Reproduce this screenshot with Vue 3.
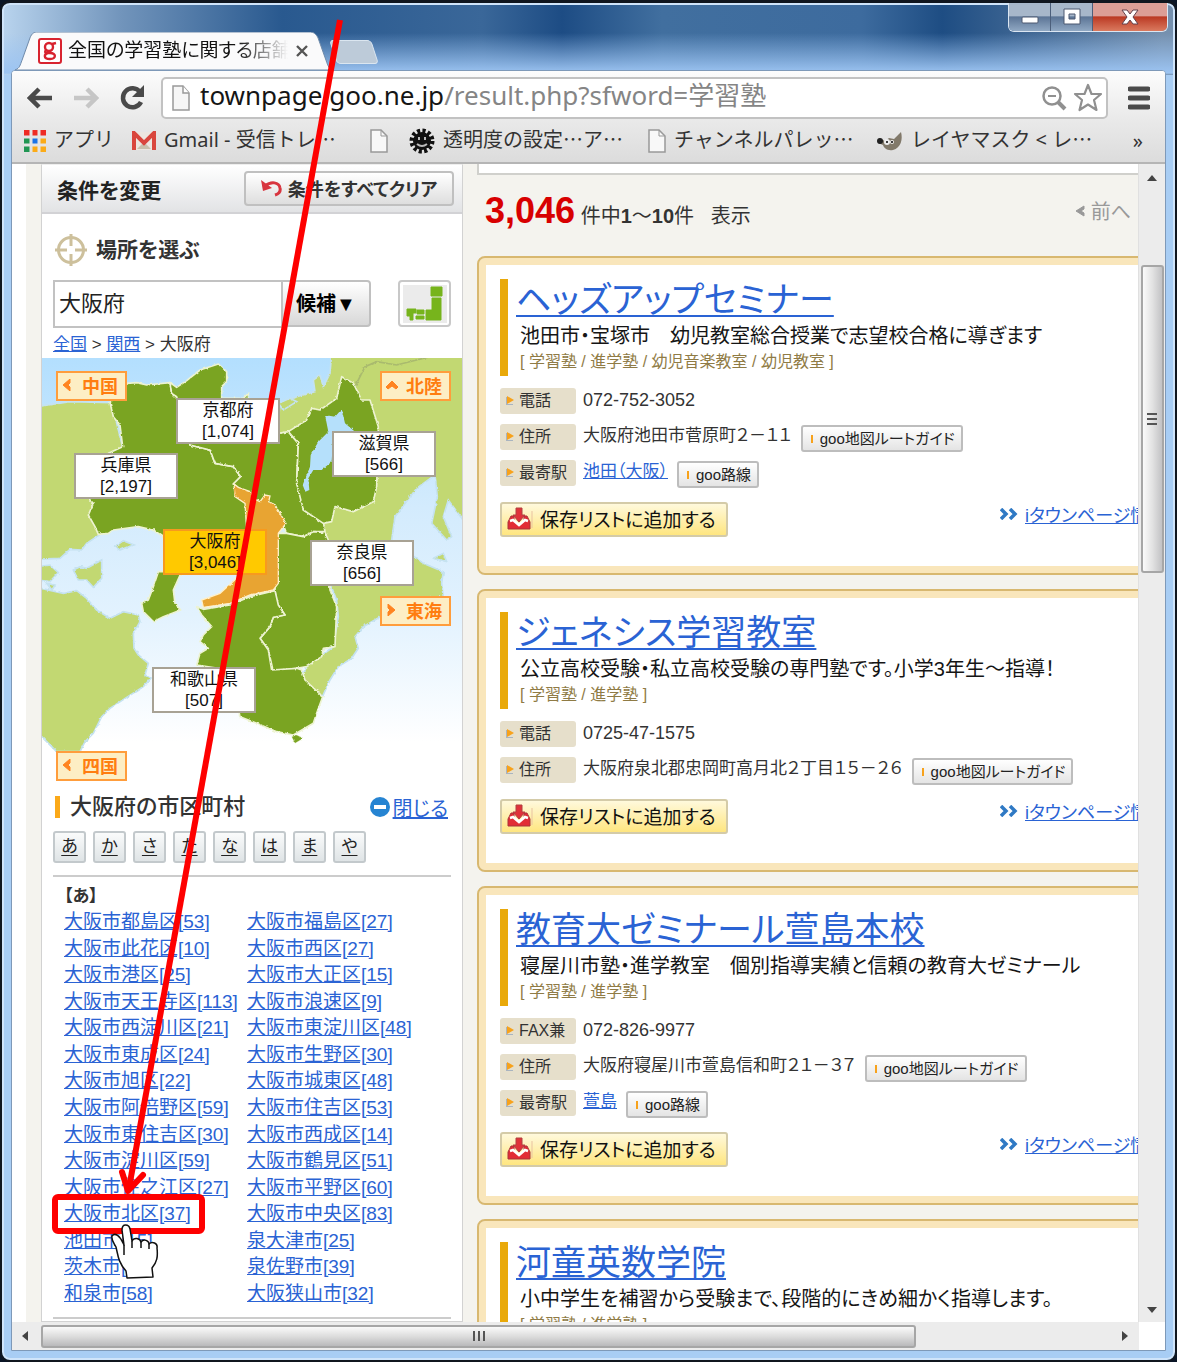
<script setup>
const kana = ['あ', 'か', 'さ', 'た', 'な', 'は', 'ま', 'や']

const wards = [
  ['大阪市都島区[53]', '大阪市福島区[27]'],
  ['大阪市此花区[10]', '大阪市西区[27]'],
  ['大阪市港区[25]', '大阪市大正区[15]'],
  ['大阪市天王寺区[113]', '大阪市浪速区[9]'],
  ['大阪市西淀川区[21]', '大阪市東淀川区[48]'],
  ['大阪市東成区[24]', '大阪市生野区[30]'],
  ['大阪市旭区[22]', '大阪市城東区[48]'],
  ['大阪市阿倍野区[59]', '大阪市住吉区[53]'],
  ['大阪市東住吉区[30]', '大阪市西成区[14]'],
  ['大阪市淀川区[59]', '大阪市鶴見区[51]'],
  ['大阪市住之江区[27]', '大阪市平野区[60]'],
  ['大阪市北区[37]', '大阪市中央区[83]'],
  ['池田市[15]', '泉大津市[25]'],
  ['茨木市[45]', '泉佐野市[39]'],
  ['和泉市[58]', '大阪狭山市[32]'],
]

const prefectures = [
  { id: 'kyoto', name: '京都府', count: '[1,074]' },
  { id: 'shiga', name: '滋賀県', count: '[566]' },
  { id: 'hyogo', name: '兵庫県', count: '[2,197]' },
  { id: 'osaka', name: '大阪府', count: '[3,046]' },
  { id: 'nara', name: '奈良県', count: '[656]' },
  { id: 'wakayama', name: '和歌山県', count: '[507]' },
]

const regions = [
  { id: 'chugoku', name: '中国', arrow: 'M8 0L1 6L8 12V8L6 6L8 4Z' },
  { id: 'hokuriku', name: '北陸', arrow: 'M0 8L6 2L12 8L10 10L6 7L2 10Z' },
  { id: 'tokai', name: '東海', arrow: 'M2 0L9 6L2 12V8L4 6L2 4Z' },
  { id: 'shikoku', name: '四国', arrow: 'M8 0L1 6L8 12V8L6 6L8 4Z' },
]

const schools = [
  {
    name: 'ヘッズアップセミナー',
    text: '池田市・宝塚市　幼児教室総合授業で志望校合格に導ぎます',
    tags: '[ 学習塾 / 進学塾 / 幼児音楽教室 / 幼児教室 ]',
    telLabel: '電話',
    tel: '072-752-3052',
    address: '大阪府池田市菅原町２－１１',
    station: '池田（大阪）',
  },
  {
    name: 'ジェネシス学習教室',
    text: '公立高校受験・私立高校受験の専門塾です。小学3年生～指導！',
    tags: '[ 学習塾 / 進学塾 ]',
    telLabel: '電話',
    tel: '0725-47-1575',
    address: '大阪府泉北郡忠岡町高月北２丁目１５－２６',
  },
  {
    name: '教育大ゼミナール萱島本校',
    text: '寝屋川市塾・進学教室　個別指導実績と信頼の教育大ゼミナール',
    tags: '[ 学習塾 / 進学塾 ]',
    telLabel: 'FAX兼',
    tel: '072-826-9977',
    address: '大阪府寝屋川市萱島信和町２１－３７',
    station: '萱島',
  },
  {
    name: '河童英数学院',
    text: '小中学生を補習から受験まで、段階的にきめ細かく指導します。',
    tags: '[ 学習塾 / 進学塾 ]',
    telLabel: '電話',
    tel: '06-6384-1120',
    address: '大阪府吹田市',
  },
]
</script>

<template>
  <div class="window">
    <header class="titlebar">
      <div class="tab">
        <svg class="tab-shape" viewBox="0 0 318 39" preserveAspectRatio="none" aria-hidden="true">
          <path d="M0 39C5 37 5 34 7 29L15 6C17 1 19 0 23 0H294C299 0 301 2 303 6L311 29C313 35 314 38 318 39Z" fill="#fafafb" stroke="#6d88a8" />
        </svg>
        <div class="tab-content">
          <svg width="26" height="28" viewBox="0 0 26 28" aria-hidden="true">
            <rect x="2" y="2" width="22" height="24" rx="2" fill="#fff" stroke="#d8232f" stroke-width="2" />
            <g fill="none" stroke="#d8232f" stroke-width="2.4">
              <circle cx="12" cy="10" r="4" /><path d="M15 7L19 6M9 13C7 16 9 16 13 16C20 16 19 22 13 22C6 22 7 17 11 16" />
            </g>
          </svg>
          <span class="tab-title">全国の学習塾に関する店舗</span>
          <button class="tab-close" aria-label="タブを閉じる">
            <svg width="12" height="12" viewBox="0 0 12 12"><path d="M1 1L11 11M11 1L1 11" stroke="#555" stroke-width="2.4" /></svg>
          </button>
        </div>
      </div>
      <button class="new-tab" aria-label="新しいタブ"></button>
      <div class="controls">
        <button aria-label="最小化"><svg width="20" height="18" viewBox="0 0 20 18"><rect x="2" y="9" width="16" height="6" rx="1" fill="#fff" stroke="#4c5870" /></svg></button>
        <button aria-label="最大化"><svg width="20" height="18" viewBox="0 0 20 18"><path d="M2 1H18V16H2ZM7 6V11H13V6Z" fill="#fff" fill-rule="evenodd" stroke="#4c5870" /></svg></button>
        <button class="close" aria-label="閉じる"><svg width="20" height="18" viewBox="0 0 20 18"><path d="M2 2H7L10 6L13 2H18L13 9L18 16H13L10 12L7 16H2L7 9Z" fill="#fff" stroke="#63404a" /></svg></button>
      </div>
    </header>

    <div class="frame">
      <nav class="toolbar">
        <button class="tool" aria-label="戻る"><svg width="26" height="24" viewBox="0 0 26 24"><path d="M12 3L3 12L12 21M4 12H25" fill="none" stroke="#4a4a4a" stroke-width="4.5" /></svg></button>
        <button class="tool" aria-label="進む"><svg width="26" height="24" viewBox="0 0 26 24"><path d="M14 3L23 12L14 21M22 12H1" fill="none" stroke="#c6c6c6" stroke-width="4.5" /></svg></button>
        <button class="tool" aria-label="再読み込み"><svg width="26" height="26" viewBox="0 0 26 26"><path d="M21 7A9.500 9.500 0 1 0 22 17" fill="none" stroke="#4a4a4a" stroke-width="4.500" /><path d="M25 0V12H13Z" fill="#4a4a4a" /></svg></button>
        <div class="omnibox">
          <svg width="18" height="26" viewBox="0 0 18 26" aria-hidden="true"><path d="M1 1H11L17 8V25H1Z" fill="#f6f6f6" stroke="#999" stroke-width="1.500" /><path d="M11 1V8H17" fill="#fff" stroke="#999" stroke-width="1.500" /></svg>
          <p class="url">townpage.goo.ne.jp<span>/result.php?sfword=学習塾</span></p>
          <button class="tool" aria-label="ズーム"><svg width="26" height="26" viewBox="0 0 26 26"><circle cx="11" cy="11" r="8.500" fill="none" stroke="#909090" stroke-width="2.500" /><path d="M7 11H15" stroke="#909090" stroke-width="2" /><path d="M17 17L24 24" stroke="#909090" stroke-width="4" /></svg></button>
          <button class="tool" aria-label="ブックマーク"><svg width="30" height="30" viewBox="0 0 30 30"><path d="M15 2L18.500 11H28L21 17L23.500 27L15 21.500L6.500 27L9 17L2 11H11.500Z" fill="#fff" stroke="#909090" stroke-width="2.200" stroke-linejoin="round" /></svg></button>
        </div>
        <button class="tool" aria-label="メニュー"><svg width="22" height="26" viewBox="0 0 22 26"><path d="M2 4H20M2 13H20M2 22H20" stroke="#4a4a4a" stroke-width="5" stroke-linecap="round" /></svg></button>
      </nav>

      <nav class="bookmarks">
        <a href="#" class="bm bm-apps">
          <svg width="22" height="22" viewBox="0 0 22 22"><path d="M0 0H6V6H0ZM8 0H14V6H8ZM16 0H22V6H16Z" fill="#ee2b24" /><path d="M0 8H6V14H0ZM0 16H6V22H0Z" fill="#219653" /><path d="M8 8H14V14H8Z" fill="#1a73e8" /><path d="M16 8H22V14H16ZM8 16H14V22H8ZM16 16H22V22H16Z" fill="#fbab18" /><path d="M7 0V22M15 0V22M0 7H22M0 15H22" stroke="#e4e4e4" stroke-width="3" /></svg>
          <span>アプリ</span>
        </a>
        <a href="#" class="bm bm-mail">
          <svg width="24" height="20" viewBox="0 0 24 20"><path d="M2 1H22V19H2Z" fill="#ece6e0" /><path d="M5 18L12 11L19 18Z" fill="#c9c0ac" /><path d="M2 19V2L12 12L22 2V19" fill="none" stroke="#d9463d" stroke-width="4" /></svg>
          <span>Gmail - 受信トレ<i>…</i></span>
        </a>
        <a href="#" class="bm bm-blank" aria-label="ページ">
          <svg width="18" height="24" viewBox="0 0 18 24"><path d="M1 1H11L17 7V23H1Z" fill="#f8f8f8" stroke="#999" stroke-width="1.500" /><path d="M11 1V7H17" fill="none" stroke="#999" /></svg>
        </a>
        <a href="#" class="bm bm-gear">
          <svg width="26" height="26" viewBox="0 0 26 26"><circle cx="13" cy="13" r="10" fill="none" stroke="#111" stroke-width="5" stroke-dasharray="3 2.250" /><circle cx="13" cy="13" r="9" fill="#111" /><path d="M10 9V12M16 9V12M8 16Q13 20 18 16" fill="none" stroke="#bbb" stroke-width="2" /></svg>
          <span>透明度の設定<i>…</i>ア<i>…</i></span>
        </a>
        <a href="#" class="bm bm-channel">
          <svg width="18" height="24" viewBox="0 0 18 24"><path d="M1 1H11L17 7V23H1Z" fill="#f8f8f8" stroke="#999" stroke-width="1.500" /><path d="M11 1V7H17" fill="none" stroke="#999" /></svg>
          <span>チャンネルパレッ<i>…</i></span>
        </a>
        <a href="#" class="bm">
          <svg width="26" height="20" viewBox="0 0 26 20"><path d="M2 7L8 10L12 7L17 8L24 1C26 8 24 17 16 19C10 20 7 17 6 14L1 12Z" fill="#81796a" /><circle cx="3" cy="10" r="3" fill="#222" /><circle cx="10" cy="11" r="3" fill="#eee" /><circle cx="15" cy="11" r="2" fill="#eee" /><circle cx="10" cy="11" r="1" /><circle cx="15" cy="11" r="1" /></svg>
          <span>レイヤマスク &lt; レ<i>…</i></span>
        </a>
        <button class="more">»</button>
      </nav>

      <div class="body">
        <div class="page">
          <aside class="side">
            <div class="side-head">
              <h2>条件を変更</h2>
              <button class="clear">
                <svg width="22" height="18" viewBox="0 0 22 18"><path d="M4 7C10 2 18 3 19 9C20 13 17 15 14 16" fill="none" stroke="#d8353f" stroke-width="3" /><path d="M0 1L2 12L11 9Z" fill="#d8353f" /></svg>
                条件をすべてクリア
              </button>
            </div>
            <label class="place" for="area">
              <svg width="32" height="32" viewBox="0 0 32 32"><circle cx="16" cy="16" r="12.500" fill="none" stroke="#cdc09c" stroke-width="3" /><path d="M16 0V12M16 20V32M0 16H12M20 16H32" stroke="#cdc09c" stroke-width="3" /></svg>
              <span>場所を選ぶ</span>
            </label>
            <div class="search">
              <input id="area" type="text" value="大阪府" />
              <button class="suggest">候補▼</button>
              <button class="japan" aria-label="地図">
                <svg width="44" height="38" viewBox="0 0 44 38"><path d="M0 0H44V38H0Z" fill="#ebebeb" /><path d="M28 2H39V11H28ZM29 13H38V35H23V25H29ZM4 24H13V28H10V35H7V31H4ZM14 25H21V29H14ZM13 31H21V34H13Z" fill="#77b41c" stroke="#77b41c" /></svg>
              </button>
            </div>
            <p class="crumbs"><a href="#">全国</a> &gt; <a href="#">関西</a> &gt; 大阪府</p>

            <div class="map">
              <svg viewBox="36 24 1260 1281" preserveAspectRatio="none" aria-hidden="true">
                <defs>
                  <linearGradient id="sea" x1="0" y1="0" x2="0" y2="1">
                    <stop offset="0" stop-color="#b3dffe" /><stop offset=".35" stop-color="#d3ebfd" /><stop offset=".6" stop-color="#e2f2fe" /><stop offset=".9" stop-color="#fff" />
                  </linearGradient>
                  <filter id="coast" x="-5%" y="-5%" width="110%" height="110%">
                    <feTurbulence type="fractalNoise" baseFrequency=".1" numOctaves="2" seed="4" />
                    <feDisplacementMap in="SourceGraphic" scale="8" xChannelSelector="R" yChannelSelector="G" />
                  </filter>
                </defs>
                <path d="M36 24H1296V1305H36Z" fill="url(#sea)" />
                <g filter="url(#coast)">
                  <g fill="#c2d872" stroke="#c5e2f0" stroke-width="5">
                    <path d="M20 170L120 155L245 158L280 300L200 450L215 550L170 580L155 600L120 598L90 625L20 628Z" />
                    <path d="M130 660L150 650L170 655L215 630L215 685L190 712L170 690L145 690ZM20 650L60 645L85 668L60 695L20 690ZM255 590L280 572L312 585L290 592L270 600ZM50 700L75 705L66 720Z" />
                    <path d="M20 712L100 730L140 722L170 745L200 780L240 805L280 785L325 795L330 815L310 850L312 895L325 915L355 940L345 975L362 985L340 1010L290 1042L240 1075L215 1100L190 1150L165 1175L150 1205H80L20 1145Z" />
                    <path d="M905 10L900 70L880 110L870 75L850 90L855 125L800 140L750 165L740 250L900 700L920 750L925 800L910 890L830 950L815 980L830 1000L875 1045L900 990L925 950L965 925L985 895L975 860L1000 830L1060 795L1130 770L1180 745L1240 740L1235 700L1240 665L1180 640L1085 570L1095 500L1160 415L1215 375L1222 440L1205 520L1250 570L1265 560L1240 500L1255 450L1310 525V10Z" />
                    <path d="M745 160L780 145L800 155L760 180ZM1210 625L1240 610L1250 635Z" />
                  </g>
                  <path d="M975 110L1005 50L1040 35L1100 45L1200 20" fill="none" stroke="#a9ba6e" stroke-width="5" />
                  <g fill="#7aa421" stroke="#edf3d1" stroke-width="5" stroke-linejoin="round">
                    <path d="M240 158L290 100L320 98L350 105L420 98L425 130L450 155L480 285L540 300L555 340L610 350L632 380L610 402L655 430L655 560H400L370 540L325 530L250 540L235 550L205 553L195 530L175 495L190 460L170 440L235 310L278 290L270 225L250 200Z" />
                    <path d="M420 98L440 112L470 92L510 60L565 42L590 65L590 95L575 110V145H640L655 130L655 155L745 250L775 245L805 280L800 400L815 440L820 480L880 515L885 545L850 545L820 560L770 550L735 465L710 455L690 460L660 440L610 402L632 380L610 350L555 340L540 300L480 285L440 140L425 130Z" />
                    <path d="M775 245L830 210L845 175L870 180L920 145L935 80L970 100L995 150L1020 150L1045 230L1040 410L1030 455L970 485L915 470L905 515L880 520L820 480L800 400L805 280Z" />
                    <path d="M745 550L770 550L820 560L850 545L885 548L895 570L900 720L920 770L915 890L880 895L875 920L830 950L800 955L730 965L715 900L690 865L720 830L730 800L765 795L740 760L735 720Z" />
                    <path d="M500 770L520 778L600 765L660 740L735 722L745 765L765 795L730 802L720 830L690 865L715 900L725 960L800 955L815 960L825 990L878 1040L860 1090L850 1120L790 1155L740 1145L680 1120L630 1100L600 960L500 945L510 910L535 895L510 875L520 855L545 830L515 795Z" />
                    <path d="M385 665L455 665L430 720L435 760L452 780L400 800L370 815L340 785L335 760L355 750L370 710Z" />
                    <path d="M785 1160L800 1155L820 1165L795 1180Z" stroke-width="1" />
                  </g>
                  <path d="M885 195L915 200L935 178L945 220L975 245L910 250L905 335L875 360L850 360L835 385L838 420L826 425L818 405L840 350L842 315L865 275L895 245Z" fill="#b5e0fb" />
                  <path d="M612 402L625 412L662 425L668 445L690 455L705 435L720 438L716 455L735 465L768 520L745 550L745 700L730 720L660 735L600 760L520 772L515 750L570 730L625 680L650 540L645 460L615 440Z" fill="#e8a433" stroke="#fff0c8" stroke-width="4" />
                </g>
              </svg>
              <a v-for="r in regions" :key="r.id" href="#" class="region" :class="r.id">
                <svg width="12" height="12" viewBox="0 0 12 12"><path :d="r.arrow" fill="#ff8420" stroke="#ff8420" /></svg>{{ r.name }}
              </a>
              <a v-for="p in prefectures" :key="p.id" href="#" class="pref" :class="p.id">{{ p.name }}<br />{{ p.count }}</a>
            </div>

            <div class="city-head">
              <h3>大阪府の市区町村</h3>
              <svg width="22" height="22" viewBox="0 0 22 22"><circle cx="11" cy="11" r="10" fill="#2684d2" /><path d="M5 11H17" stroke="#fff" stroke-width="4" /></svg>
              <a href="#">閉じる</a>
            </div>
            <div class="kana"><button v-for="k in kana" :key="k">{{ k }}</button></div>
            <div class="cities">
              <h4>【あ】</h4>
              <ul>
                <li v-for="row in wards" :key="row[0]"><a href="#">{{ row[0] }}</a><a href="#">{{ row[1] }}</a></li>
              </ul>
            </div>
          </aside>

          <main class="results">
            <div class="strip"></div>
            <div class="summary">
              <p><strong>3,046</strong> 件中<b>1</b>～<b>10</b>件&nbsp;&nbsp; 表示</p>
              <span class="prev"><svg width="10" height="12" viewBox="0 0 10 12"><path d="M9 1L1 6L9 11V8L6 6L9 4Z" fill="#999" stroke="#999" /></svg>前へ</span>
            </div>
            <article v-for="s in schools" :key="s.name" class="card">
              <div class="card-head">
                <h2><a href="#">{{ s.name }}</a></h2>
                <p class="desc">{{ s.text }}</p>
                <p class="tags">{{ s.tags }}</p>
              </div>
              <dl>
                <div><dt>{{ s.telLabel }}</dt><dd class="tel">{{ s.tel }}</dd></div>
                <div><dt>住所</dt><dd>{{ s.address }}</dd><dd><button class="mini">goo地図ルートガイド</button></dd></div>
                <div v-if="s.station"><dt>最寄駅</dt><dd><a href="#">{{ s.station }}</a></dd><dd><button class="mini">goo路線</button></dd></div>
              </dl>
              <div class="actions">
                <button class="save">
                  <svg width="26" height="24" viewBox="0 0 26 24"><path d="M1 22V15L4 9H7V14L12 19L17 14V9H20L23 15V22Z" fill="#e22d36" stroke="#a9343a" /><path d="M3 14L6 13L12 18L18 13L21 14" fill="none" stroke="#fff" stroke-width="2.500" /><path d="M9 1H15V8H18L12 15L6 8H9Z" fill="#e0323a" stroke="#b04040" /><path d="M25 4V21" stroke="#e9c3a0" /></svg>
                  保存リストに追加する
                </button>
                <div class="detail">
                  <svg width="19" height="12" viewBox="0 0 19 12"><path d="M1 1L6 6L1 11M10 1L15 6L10 11" fill="none" stroke="#2f79c4" stroke-width="3.500" /></svg>
                  <a href="#">iタウンページ情報</a>
                </div>
              </div>
            </article>
          </main>
        </div>
        <div class="vbar">
          <svg width="12" height="8" viewBox="0 0 12 8"><path d="M6 1L11 7H1Z" fill="#444" /></svg>
          <div class="vthumb"><svg width="12" height="14" viewBox="0 0 12 14"><path d="M1 2H11M1 7H11M1 12H11" stroke="#555" stroke-width="2" /></svg></div>
          <svg class="down" width="12" height="8" viewBox="0 0 12 8"><path d="M1 1H11L6 7Z" fill="#444" /></svg>
        </div>
      </div>
      <div class="hbar">
        <svg width="8" height="12" viewBox="0 0 8 12"><path d="M7 1V11L1 6Z" fill="#444" /></svg>
        <div class="hthumb"><svg width="14" height="12" viewBox="0 0 14 12"><path d="M2 1V11M7 1V11M12 1V11" stroke="#555" stroke-width="2" /></svg></div>
        <svg width="8" height="12" viewBox="0 0 8 12"><path d="M1 1V11L7 6Z" fill="#444" /></svg>
      </div>
    </div>

    <svg class="guide" width="360" height="1290" viewBox="0 0 360 1290" aria-hidden="true">
      <rect x="55" y="1197" width="147" height="34" rx="3" fill="none" stroke="#fe0000" stroke-width="6" />
      <path d="M340 20L129 1188" stroke="#fe0000" stroke-width="6" />
      <path d="M122 1172L128 1191L143 1175" fill="none" stroke="#fe0000" stroke-width="6" stroke-linecap="round" stroke-linejoin="round" />
      <path d="M127 1278L126 1271C118 1262 118 1255 116 1247C114 1243 111 1240 112 1236C115 1232 120 1236 123 1243L124 1245L122 1230C122 1223 129 1224 130 1229L132 1241C134 1237 140 1238 141 1242C144 1238 149 1241 149 1244C152 1241 158 1243 157 1248C158 1257 157 1262 152 1268L153 1277Z" fill="#fff" stroke="#111" stroke-width="1.500" stroke-linejoin="round" />
      <path d="M124 1245V1255M132 1241V1248M141 1242V1248M149 1244V1249" stroke="#111" stroke-width="1.500" />
    </svg>
  </div>
</template>

<style>
body { background: #0a1526; }
</style>

<style scoped>
* { box-sizing: border-box; margin: 0; padding: 0; }
.window {
  position: relative;
  display: flex;
  flex-direction: column;
  height: 100vh;
  overflow: hidden;
  padding: 3px 9px 9px;
  border: 2px solid #10161f;
  border-top-width: 3px;
  border-radius: 10px;
  box-shadow: inset 0 0 0 2px #cfe4fa;
  background:
    linear-gradient(to bottom, transparent 30px, #9cc4f2 70px, transparent 72px) top / 100% 72px no-repeat,
    linear-gradient(to right, #b9d4ee 0, #7194bb 120px, #29598f 280px, #3a6799 480px, #1d4c84 560px, #416f9f 660px, #3d6b9e 860px, #1e4d83 940px, #7590ae 1160px) top / 100% 72px no-repeat,
    #a8cdf4;
  font-family: "Liberation Sans", "Noto Sans CJK JP", sans-serif;
  font-feature-settings: "palt";
  color: #333;
}
svg { display: block; flex: none; }
button { font: inherit; font-feature-settings: inherit; color: inherit; border: 0; background: none; }
a { color: #2a63d4; }

.titlebar { display: flex; height: 64px; flex: none; padding-left: 4px; }
.tab { position: relative; width: 318px; height: 38px; margin-top: 26px; }
.tab-shape { position: absolute; inset: 0; width: 100%; height: 100%; }
.tab-content { position: relative; display: flex; align-items: center; height: 38px; padding: 0 22px; }
.tab-title {
  width: 220px; margin-left: 5px; overflow: hidden; white-space: nowrap; font-size: 19px; line-height: 28px; color: #111;
  -webkit-mask-image: linear-gradient(to right, #000 170px, transparent 220px);
  mask-image: linear-gradient(to right, #000 170px, transparent 220px);
}
.tab-close { margin-left: 8px; }
.new-tab { width: 42px; height: 24px; margin-top: 34px; background: #bdcbd9; border: 1px solid #dbe6f0; border-radius: 4px; transform: skewX(18deg); }
.controls { display: flex; height: 29px; margin: -3px -2px 0 auto; border: 1px solid #dbe6f2; border-top: 0; border-radius: 0 0 6px 6px; overflow: hidden; }
.controls button { display: flex; align-items: center; justify-content: center; width: 42px; border-right: 1px solid #4c5f7b; background: linear-gradient(#a7b7ca 45%, #5c7596 50%, #90a8c3); }
.controls .close { width: 74px; border: 0; background: linear-gradient(#dc9e96 45%, #bb3a24 50%, #da7a5f); }

.frame { display: flex; flex-direction: column; flex: 1; min-height: 0; border: 1px solid #7e99b8; border-radius: 4px 4px 0 0; background: #fff; overflow: hidden; }
.toolbar { display: flex; align-items: center; gap: 20px; height: 50px; flex: none; padding: 4px 15px 0; background: linear-gradient(#fcfcfc, #e9e9e9); }
.tool { display: flex; }
.omnibox { display: flex; flex: 1; align-items: center; height: 42px; margin-left: -4px; padding: 0 3px 0 9px; border: 2px solid #c2c2c2; border-radius: 5px; background: #fff; }
.url { flex: 1; height: 38px; margin-left: 10px; font: 26px/32px "Noto Sans", "Noto Sans CJK JP", sans-serif; color: #151515; white-space: nowrap; }
.url span { color: #858585; }
.omnibox .tool + .tool { margin-left: 6px; }
.bookmarks { display: flex; align-items: center; height: 43px; flex: none; padding: 0 22px 0 12px; background: linear-gradient(#e9e9e9, #dcdcdc); border-bottom: 2px solid #b5b5b5; font: 20px/28px "Noto Sans", "Noto Sans CJK JP", sans-serif; }
.bm { display: flex; align-items: center; gap: 8px; padding-bottom: 2px; color: #333; text-decoration: none; white-space: nowrap; }
.bm span, .more { padding-bottom: 2px; }
.bm i { font-family: "Noto Sans CJK JP", sans-serif; font-style: normal; }
.bm-apps { width: 108px; }
.bm-mail { width: 238px; }
.bm-blank { width: 39px; }
.bm-gear { width: 239px; }
.bm-channel { width: 229px; }
.more { margin-left: auto; }

.body { display: flex; flex: 1; min-height: 0; }
.page { display: flex; flex: 1; min-width: 0; overflow: hidden; margin-left: 14px; padding-left: 15px; background: #f4f3ee; }
.side { width: 422px; flex: none; border: 1px solid #d2d2d2; border-top-color: #eee; background: #fff; }
.side-head { display: flex; align-items: center; justify-content: space-between; height: 49px; padding: 0 8px 0 15px; border-bottom: 2px solid #d2d2d5; background: linear-gradient(#fff, #e2e3e5); }
h2 { font-size: 21px; color: #222; }
.clear { display: flex; align-items: center; justify-content: center; gap: 5px; width: 210px; height: 35px; padding-bottom: 2px; border: 2px solid #c0c0c0; border-radius: 4px; background: linear-gradient(#fff, #dedede); font-size: 18px; font-weight: bold; white-space: nowrap; }
.place { display: flex; align-items: center; gap: 9px; height: 66px; padding: 6px 13px 0; font-size: 21px; font-weight: bold; }
.place span { padding-bottom: 4px; }
.search { display: flex; padding: 0 11px; }
.search input { width: 230px; height: 48px; padding: 0 4px 6px; border: 2px solid #c2c2c2; font: 22px "Liberation Sans", "Noto Sans CJK JP", sans-serif; color: #222; }
.suggest { width: 88px; height: 47px; padding-bottom: 2px; border: 2px solid #c0c0c0; border-left: 0; background: linear-gradient(#fff, #d8d8d8); border-radius: 0 4px 4px 0; font-size: 20px; font-weight: bold; color: #000; }
.japan { display: flex; align-items: center; justify-content: center; width: 53px; height: 47px; margin-left: auto; border: 2px solid #c8c8c8; border-radius: 4px; background: #fff; }
.crumbs { padding: 2px 11px 0; height: 30px; font-size: 17px; line-height: 30px; }

.map { position: relative; height: 427px; }
.map > svg { width: 100%; height: 100%; }
.pref { position: absolute; width: 104px; height: 46px; border: 2px solid #a8a294; background: #fff; text-align: center; font-size: 17px; line-height: 21px; color: #111; text-decoration: none; }
.kyoto { left: 134px; top: 40px; }
.shiga { left: 290px; top: 73px; }
.hyogo { left: 32px; top: 95px; }
.osaka { left: 121px; top: 171px; background: #ffc900; border-color: #f79a1e; }
.nara { left: 268px; top: 182px; }
.wakayama { left: 110px; top: 309px; }
.region { position: absolute; display: flex; align-items: center; gap: 8px; width: 71px; height: 30px; padding: 0 4px 2px; border: 2px solid #ff9d3c; background: #fdeec4; color: #ff7d10; font-size: 18px; font-weight: bold; text-decoration: none; white-space: nowrap; }
.chugoku { left: 14px; top: 13px; }
.hokuriku { right: 11px; top: 13px; }
.tokai { right: 11px; top: 238px; }
.shikoku { left: 14px; top: 393px; }

.city-head { display: flex; align-items: center; height: 44px; padding: 0 14px 0 13px; }
.city-head h3 { flex: 1; padding-left: 10px; border-left: 5px solid #fba919; font-size: 22px; line-height: 22px; font-weight: 500; }
.city-head a { margin-left: 2px; font-size: 20px; }
.kana { display: flex; gap: 7px; margin: 0 11px; padding: 2px 0 12px; border-bottom: 2px solid #ccc; }
.kana button { width: 33px; height: 32px; border: 2px solid #c3c9cc; border-radius: 3px; background: linear-gradient(#fafbfb, #dfe4e6); font-size: 17px; line-height: 24px; color: #222; text-decoration: underline; text-underline-offset: 3px; }
.cities { margin: 0 11px; padding: 8px 0 10px 11px; border-bottom: 2px solid #ccc; }
h4 { font-size: 17px; line-height: 24px; }
.cities ul { display: flex; flex-direction: column; justify-content: space-between; height: 398px; list-style: none; }
.cities li { display: grid; grid-template-columns: 183px 1fr; font-size: 19px; line-height: 26px; white-space: nowrap; }

.results { flex: 1; min-width: 0; margin-left: 14px; }
.strip { height: 11px; margin-right: -80px; border: 2px solid #d0d0cc; border-top: 0; background: #fff; }
.summary { display: flex; align-items: center; justify-content: space-between; height: 83px; padding: 0 7px 12px 8px; font-size: 20px; white-space: nowrap; }
.summary strong { font-size: 36px; color: #d80000; }
.prev { display: flex; align-items: center; gap: 6px; color: #999; }
.card { width: 760px; margin: 0 0 18px 2px; padding: 14px 14px 29px; border: 7px solid #f9e6bb; outline: 2px solid #d8b870; border-radius: 6px; background: #fff; }
.card-head { height: 97px; padding-left: 8px; border-left: 8px solid #e9a90a; white-space: nowrap; }
.card-head h2 { font-size: 35px; line-height: 42px; font-weight: 400; }
.card-head h2 a { text-decoration-thickness: 2px; text-underline-offset: 3px; }
.desc { padding-left: 4px; font-size: 20px; line-height: 30px; color: #151515; }
.tags { padding-left: 4px; font-size: 16px; line-height: 22px; color: #8f7b45; }
dl { display: flex; flex-direction: column; gap: 10px; margin-top: 12px; }
dl div { display: flex; height: 26px; }
dt { position: relative; width: 76px; padding-left: 19px; border-radius: 3px; background: #e6dfcb; font-size: 16px; line-height: 26px; white-space: nowrap; }
dt::before { content: ""; position: absolute; left: 7px; top: 8px; border: 4px solid transparent; border-left: 7px solid #f7a21c; border-right: 0; box-shadow: -1px 1px #a9b4c0; }
dd { margin-left: 7px; font-size: 17px; line-height: 24px; white-space: nowrap; }
dd.tel { font-size: 18px; }
dd + dd { margin-left: 9px; }
.mini { height: 27px; margin-top: 1px; padding: 0 6px 0 17px; border: 2px solid #bdbdbd; border-radius: 3px; background: linear-gradient(#f7a21c, #f7a21c) 8px 8px / 2px 8px no-repeat, linear-gradient(#fff, #e4e4e4); font-size: 15px; line-height: 22px; color: #222; }
.actions { display: flex; align-items: flex-start; margin-top: 16px; font-size: 18px; white-space: nowrap; }
.save { display: flex; align-items: center; gap: 7px; width: 228px; height: 35px; padding: 0 5px 2px; border: 2px solid #d4cba8; border-radius: 3px; background: linear-gradient(#fff9dc, #ffe680); font-size: 19px; color: #111; }
.detail { display: flex; align-items: center; gap: 6px; height: 24px; margin-left: 272px; }

.vbar { display: flex; flex-direction: column; align-items: center; width: 27px; padding: 10px 0 8px; border-left: 1px solid #e0e0e0; background: #ececec; }
.down { margin-top: auto; }
.vthumb { display: flex; align-items: center; justify-content: center; width: 23px; height: 308px; margin-top: 83px; border: 2px solid #a6a6a6; border-radius: 3px; background: linear-gradient(to right, #fafafa, #e2e2e2 50%, #c2c2c4); }
.hbar { display: flex; align-items: center; height: 28px; flex: none; padding: 0 36px 0 9px; background: linear-gradient(to left, #fff 26px, #ececec 26px); }
.hthumb { display: flex; align-items: center; justify-content: center; width: 79%; height: 23px; margin: 0 auto 0 12px; border: 2px solid #a6a6a6; border-radius: 3px; background: linear-gradient(#fafafa, #dcdcdc 50%, #b9b9bb); }

.guide { position: absolute; left: -2px; top: -3px; pointer-events: none; }
</style>
